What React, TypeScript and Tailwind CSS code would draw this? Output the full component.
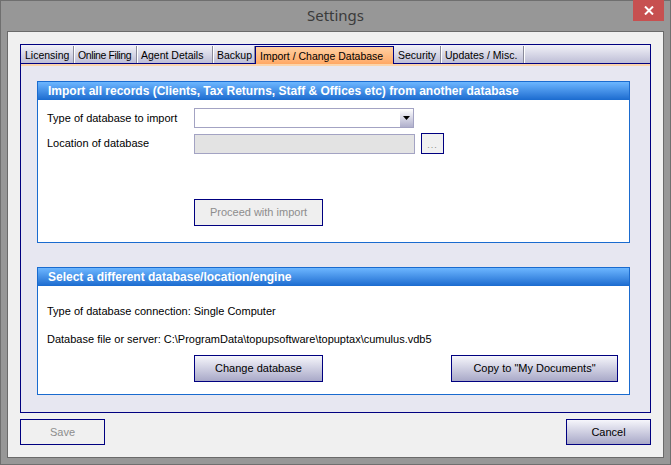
const font = "font-['Liberation_Sans',Arial,sans-serif]"

const tabs = [
  { label: "Licensing", w: "w-[53px]", t: "" },
  { label: "Online Filing", w: "w-[63px]", t: "tracking-[-0.4px]" },
  { label: "Agent Details", w: "w-[76px]", t: "" },
  { label: "Backup", w: "w-[42px]", t: "" },
  { label: "Import / Change Database", w: "w-[139px]", t: "", active: true },
  { label: "Security", w: "w-[47px]", t: "" },
  { label: "Updates / Misc.", w: "w-[83px]", t: "" },
]

const GroupHeader = ({ title }: { title: string }) => (
  <div className="h-[18px] bg-gradient-to-b from-[#6cb6ff] to-[#1a6bcf] pl-[10px] text-[12px] leading-[18px] font-bold text-white whitespace-nowrap">
    {title}
  </div>
)

const App = () => {
  return (
    <div className={`w-[671px] h-[465px] bg-[#979797] border border-[#6f6f6f] flex flex-col ${font} text-[11px] text-black`}>
      {/* title bar */}
      <div className="relative h-[30px] flex items-center justify-center">
        <span className="font-['Noto_Sans',sans-serif] text-[15px] text-[#3b3b3b] -mt-[1px]">Settings</span>
        <div className="absolute right-[6px] -top-[1px] w-[31px] h-[21px] bg-[#c75050] flex items-center justify-center">
          <svg width="10" height="9" viewBox="0 0 10 9">
            <path d="M1 0.5 L9 8.5 M9 0.5 L1 8.5" stroke="white" strokeWidth="2" />
          </svg>
        </div>
      </div>

      {/* client area */}
      <div className="mx-[6px] mb-[6px] flex-1 bg-[#f0f0f0] border border-[#6a6a6a] flex flex-col px-[12px] pt-[12px]">
        {/* tab control */}
        <div className="h-[369px] border border-[#000080] flex flex-col bg-[#e7e7f1]">
          <div className="h-[19px] flex items-end bg-gradient-to-b from-[#f2f2f8] to-[#bebed6] border-b border-[#000080]">
            {tabs.map((t) =>
              t.active ? (
                <div
                  key={t.label}
                  className={`${t.w} h-[18px] -mb-[1px] border border-b-0 border-[#000080] bg-gradient-to-b from-[#ffd0a2] to-[#ffa865] pl-[4px] pt-[1px] text-[10.5px] leading-[17px] whitespace-nowrap`}
                >
                  {t.label}
                </div>
              ) : (
                <div
                  key={t.label}
                  className={`${t.w} ${t.t} h-[17px] pl-[4px] pt-[1px] text-[10.5px] leading-[16px] whitespace-nowrap overflow-hidden border-r border-r-[#8a8a9a] shadow-[1px_0_0_#ffffff]`}
                >
                  {t.label}
                </div>
              )
            )}
          </div>
          <div className="h-[2px] bg-[#fbd4aa]" />

          <div className="flex-1 pl-[16px] pr-[20px] pt-[15px]">
            {/* group 1 */}
            <div className="h-[162px] border border-[#1a6bcf] bg-white flex flex-col">
              <GroupHeader title="Import all records (Clients, Tax Returns, Staff & Offices etc) from another database" />
              <div className="flex flex-col pl-[9px] pt-[8px]">
                <div className="flex items-center h-[20px]">
                  <span className="w-[147px]">Type of database to import</span>
                  <div className="w-[220px] h-[20px] border border-[#a3a3c3] bg-white flex justify-end">
                    <div className="w-[13px] h-full bg-gradient-to-b from-[#ffffff] to-[#b0b0cc] flex items-center justify-center">
                      <svg width="7" height="4" viewBox="0 0 7 4">
                        <path d="M0 0 H7 L3.5 4 Z" fill="#000" />
                      </svg>
                    </div>
                  </div>
                </div>
                <div className="flex items-center h-[21px] mt-[5px]">
                  <span className="w-[147px]">Location of database</span>
                  <div className="w-[221px] h-[20px] border border-[#a3a3c3] bg-[#e3e3e3]" />
                  <div className="ml-[6px] w-[23px] h-[21px] border border-[#000080] bg-[#f0f0f0] flex items-end justify-center pb-[3px] text-[9px] leading-none text-[#8a8a8a] tracking-[1px]">
                    ...
                  </div>
                </div>
                <div className="flex mt-[45px]">
                  <div className="ml-[147px] w-[129px] h-[27px] border border-[#000080] bg-[#efefef] text-[#8d8d8d] flex items-center justify-center">
                    Proceed with import
                  </div>
                </div>
              </div>
            </div>

            {/* group 2 */}
            <div className="mt-[24px] h-[128px] border border-[#1a6bcf] bg-white flex flex-col">
              <GroupHeader title="Select a different database/location/engine" />
              <div className="flex flex-col pl-[9px] pr-[11px]">
                <div className="mt-[18px] h-[14px] leading-[14px]">Type of database connection: Single Computer</div>
                <div className="mt-[14px] h-[14px] leading-[14px]">
                  Database file or server: C:\ProgramData\topupsoftware\topuptax\cumulus.vdb5
                </div>
                <div className="mt-[9px] flex justify-between">
                  <div className="ml-[147px] w-[129px] h-[27px] border border-[#000080] bg-gradient-to-b from-[#f6f6fb] to-[#a9a9c8] flex items-center justify-center">
                    Change database
                  </div>
                  <div className="w-[167px] h-[27px] border border-[#000080] bg-gradient-to-b from-[#f6f6fb] to-[#a9a9c8] flex items-center justify-center">
                    Copy to "My Documents"
                  </div>
                </div>
              </div>
            </div>
          </div>
        </div>

        {/* bottom buttons */}
        <div className="mt-[6px] flex justify-between">
          <div className="w-[85px] h-[26px] border border-[#000080] bg-[#f0f0f0] text-[#8d8d8d] flex items-center justify-center">
            Save
          </div>
          <div className="w-[85px] h-[26px] border border-[#000080] bg-gradient-to-b from-[#f6f6fb] to-[#a9a9c8] flex items-center justify-center">
            Cancel
          </div>
        </div>
      </div>
    </div>
  )
}

export default App
